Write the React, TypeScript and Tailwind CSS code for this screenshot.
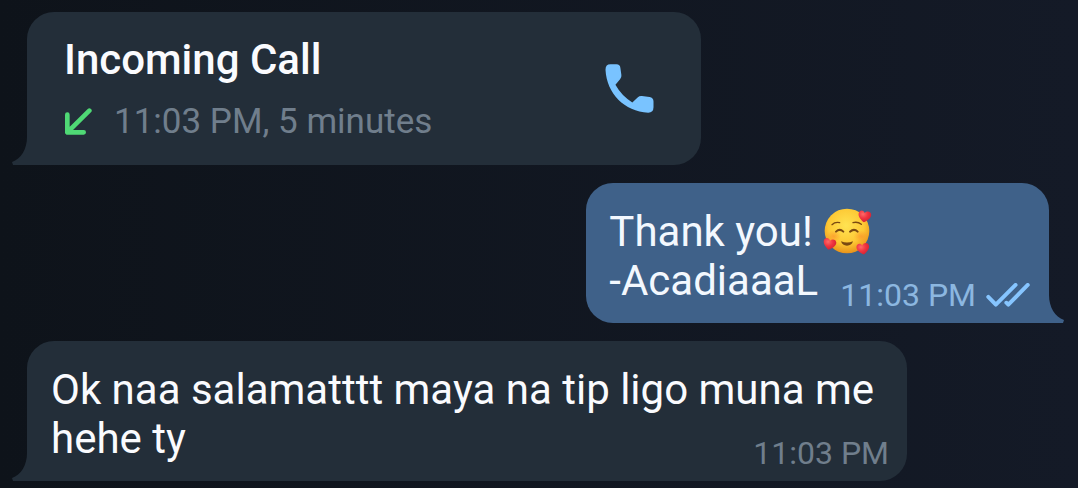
import { ReactNode } from 'react';
import clsx from 'clsx';

interface BubbleProps {
  isMine?: boolean;
  className?: string;
  children: ReactNode;
}

interface MessageMetaProps {
  time: string;
  isMine?: boolean;
}

function BubbleTail({ isMine }: { isMine: boolean }) {
  return (
    <svg
      viewBox="0 0 15 28"
      aria-hidden="true"
      className={clsx(
        'absolute bottom-0 h-[28px] w-[15px]',
        isMine ? 'left-full -scale-x-100 text-[#3f6189]' : 'right-full text-[#232e39]',
      )}
    >
      <path d="M15 0C15 12 9 22 0 25L1 28H15Z" fill="currentColor" />
    </svg>
  );
}

function Bubble({ isMine = false, className, children }: BubbleProps) {
  return (
    <article
      className={clsx(
        'relative rounded-t-[27px] text-[42px] leading-[49px]',
        isMine
          ? 'self-end rounded-bl-[27px] bg-[#3f6189] text-[#f3f8fe]'
          : 'rounded-br-[27px] bg-[#232e39] text-[#fafbfe]',
        className,
      )}
    >
      {children}
      <BubbleTail isMine={isMine} />
    </article>
  );
}

function ReadIcon() {
  return (
    <svg viewBox="78 67 132 73" role="img" aria-label="Read" className="h-[24px] w-[44px]">
      <g fill="none" stroke="#86c5ff" strokeWidth="12" strokeLinecap="round" strokeLinejoin="round">
        <path d="M84 109L107 133L167 73" />
        <path d="M139 127L145 133L204 73" />
      </g>
    </svg>
  );
}

function MessageMeta({ time, isMine = false }: MessageMetaProps) {
  return (
    <span
      className={clsx(
        'float-right mt-5 ml-[22px] flex items-center gap-[10px] text-[32px] leading-[38px]',
        isMine ? 'text-[#8cb7e0]' : 'text-[#707e8c]',
      )}
    >
      <time>{time}</time>
      {isMine && <ReadIcon />}
    </span>
  );
}

function IncomingIcon() {
  return (
    <svg viewBox="46 34 81 81" aria-hidden="true" className="size-[27px]">
      <path
        d="M119 42L53 107M53 54V107H102"
        fill="none"
        stroke="#4fd975"
        strokeWidth="14"
        strokeLinecap="round"
        strokeLinejoin="round"
      />
    </svg>
  );
}

function PhoneIcon() {
  return (
    <svg viewBox="76 74 147 148" aria-hidden="true" className="size-[49px]">
      <path
        d="M92 75H110Q121 75 122 86L125 107Q126 114 121 120L107 137Q126 171 158 190L174 175Q180 170 187 171L210 174Q222 176 222 187V205Q222 221 206 221C134 216 81 164 77 91Q77 75 92 75Z"
        fill="#79c3ff"
      />
    </svg>
  );
}

function HeartsFace() {
  const heart = 'M0 19C-9 13 -20 4 -19 -6C-18 -17 -5 -18 -1 -9C5 -18 18 -16 19 -6C20 4 9 13 0 19Z';

  return (
    <svg
      viewBox="36 36 147 147"
      role="img"
      aria-label="Smiling face with hearts"
      className="inline-block size-[49px] align-top"
    >
      <defs>
        <radialGradient id="face" cx="0.48" cy="0.38" r="0.62">
          <stop offset="0" stopColor="#ffe352" />
          <stop offset="0.65" stopColor="#fdc834" />
          <stop offset="1" stopColor="#e8921a" />
        </radialGradient>
        <radialGradient id="blush">
          <stop offset="0" stopColor="#fb8a2a" stopOpacity="0.6" />
          <stop offset="1" stopColor="#fb8a2a" stopOpacity="0" />
        </radialGradient>
        <radialGradient id="heart" cx="0.35" cy="0.3" r="0.75">
          <stop offset="0" stopColor="#ff6a68" />
          <stop offset="0.5" stopColor="#f0343f" />
          <stop offset="1" stopColor="#cf1f33" />
        </radialGradient>
      </defs>
      <circle cx="108" cy="108" r="67" fill="url(#face)" />
      <ellipse cx="68" cy="124" rx="22" ry="18" fill="url(#blush)" />
      <ellipse cx="150" cy="124" rx="22" ry="18" fill="url(#blush)" />
      <g fill="none" stroke="#7a4a12" strokeWidth="6" strokeLinecap="round">
        <path d="M63 89Q72 80 86 83" strokeWidth="4" />
        <path d="M126 83Q140 79 151 88" strokeWidth="4" />
        <path d="M75 110Q86 99 97 110" />
        <path d="M117 110Q129 99 140 110" />
      </g>
      <path d="M90 139Q108 146 126 139Q122 152 108 152Q94 152 90 139Z" fill="#7a4a12" />
      <g fill="url(#heart)">
        <path d={heart} transform="translate(161 63) rotate(8)" />
        <path d={heart} transform="translate(56 146) rotate(12)" />
        <path d={heart} transform="translate(156 160) rotate(-8)" />
      </g>
    </svg>
  );
}

export default function App() {
  return (
    <main className="flex min-h-screen flex-col items-start gap-[18px] bg-linear-to-r from-[#0e131a] to-[#141a27] pt-3 pr-[29px] pb-[7px] pl-[27px] font-['Roboto',sans-serif]">
      <Bubble className="flex w-full max-w-[674px] items-center justify-between pt-[23px] pr-[47px] pb-[23px] pl-[37px]">
        <div className="flex flex-col gap-[17px]">
          <h2 className="font-medium">Incoming Call</h2>
          <p className="flex items-center gap-[22px] pl-px text-[35px] leading-[41px] text-[#707e8c]">
            <IncomingIcon />
            11:03 PM, 5 minutes
          </p>
        </div>
        <button type="button" aria-label="Call back" className="cursor-pointer">
          <PhoneIcon />
        </button>
      </Bubble>

      <Bubble isMine className="flow-root pt-6 pr-[19px] pb-[9px] pl-[23px]">
        Thank you! <HeartsFace />
        <br />
        -AcadiaaaL
        <MessageMeta time="11:03 PM" isMine />
      </Bubble>

      <Bubble className="flow-root w-full max-w-[880px] pt-6 pr-[18px] pb-[9px] pl-6">
        Ok naa salamatttt maya na tip ligo muna me hehe ty
        <MessageMeta time="11:03 PM" />
      </Bubble>
    </main>
  );
}
